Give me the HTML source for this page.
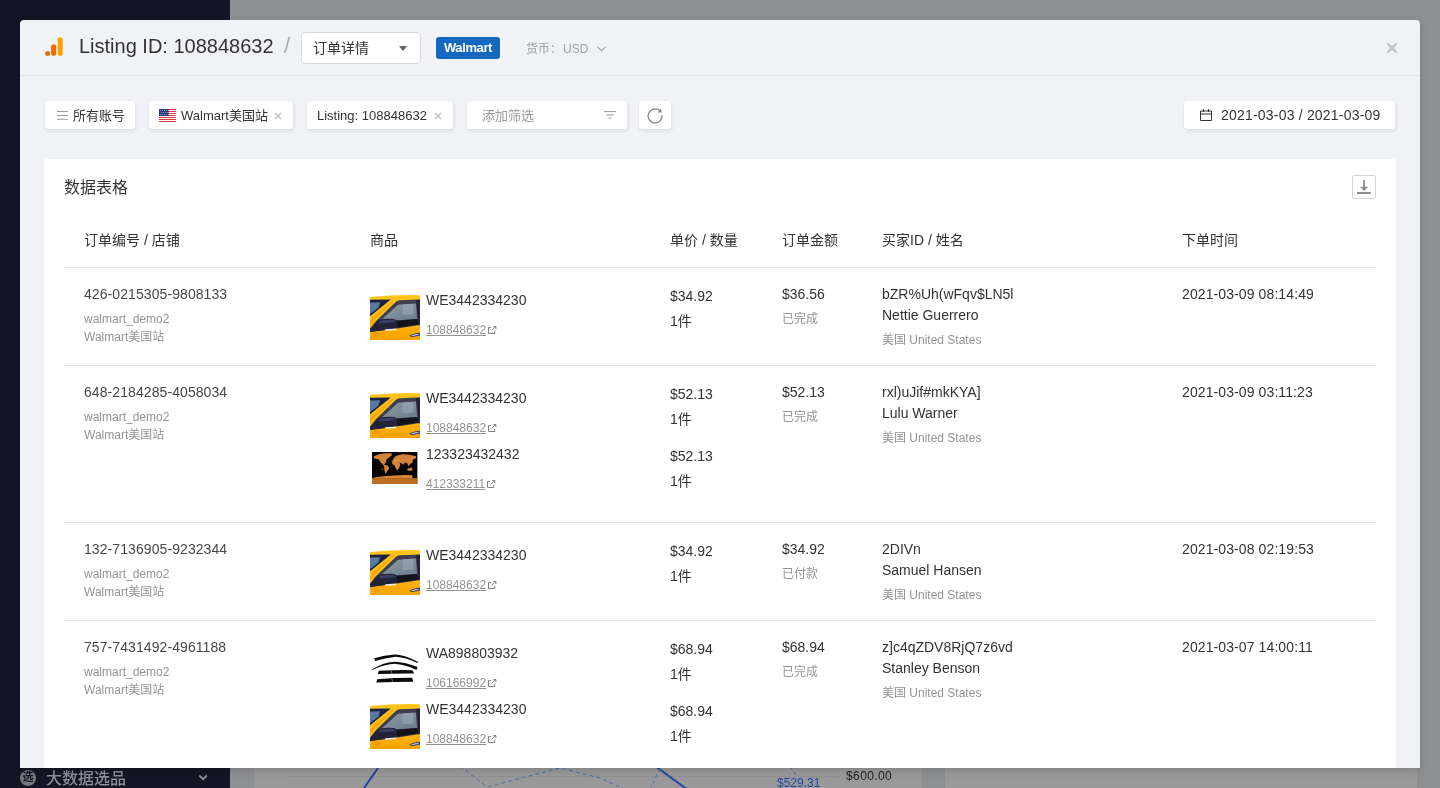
<!DOCTYPE html>
<html lang="zh-CN">
<head>
<meta charset="utf-8">
<title>Listing ID: 108848632</title>
<style>
*{box-sizing:border-box;margin:0;padding:0}
html,body{width:1440px;height:788px;overflow:hidden}
body{font-family:"Liberation Sans","Noto Sans CJK SC",sans-serif;font-size:14px;color:#333;background:#8e8f91;position:relative}
.abs{position:absolute}
/* background app */
.sidebar{position:absolute;left:0;top:0;width:230px;height:788px;background:#151526}
.sb-item{position:absolute;left:0;top:768px;width:230px;height:20px;color:#8d8d95;font-size:16px;line-height:20px;font-weight:500;will-change:transform}
.sb-ico{position:absolute;left:20px;top:2px;width:16px;height:16px;border-radius:50%;background:#77777f;color:#151526;font-size:11px;line-height:15px;text-align:center;font-weight:bold}
.bgpanel{position:absolute;background:#999999}
/* modal */
.modal{will-change:transform;position:absolute;left:20px;top:20px;width:1400px;height:748px;background:#f0f2f5;border-radius:4px 4px 0 0;box-shadow:0 3px 9px rgba(0,0,0,.15);overflow:hidden}
.mhead{position:absolute;left:0;top:0;width:1400px;height:56px;border-bottom:1px solid #e2e4e8}
.title{position:absolute;left:59px;top:12px;font-size:20px;line-height:28px;color:#333;white-space:nowrap}
.slash{position:absolute;left:264px;top:12px;font-size:22px;line-height:28px;color:#a8a8a8}
.sel{position:absolute;left:281px;top:12px;width:120px;height:32px;background:#fff;border:1px solid #d9d9d9;border-radius:4px;font-size:14px;line-height:30px;padding-left:11px;color:#333}
.sel i{position:absolute;right:13px;top:12.5px;width:0;height:0;border:4.6px solid transparent;border-top:5.8px solid #626262;border-bottom:0}
.badge{position:absolute;left:416px;top:17px;width:64px;height:22px;background:#1468c0;border-radius:3px;color:#fff;font-weight:bold;font-size:13px;line-height:22px;text-align:center;letter-spacing:-.4px}
.cur{position:absolute;left:506px;top:20px;font-size:12px;line-height:18px;color:#a0a0a0;white-space:nowrap}
.close{position:absolute;left:1364px;top:20px;width:16px;height:16px}
/* filter bar */
.fbtn{position:absolute;top:81px;height:28px;background:#fff;border-radius:2.5px;box-shadow:0 0 1px rgba(0,0,0,.14),1px 2px 4px rgba(0,0,0,.08);font-size:13px;line-height:30px;color:#333;white-space:nowrap}
.fbtn .x{color:#aaa;font-size:13px}
/* panel */
.panel{position:absolute;left:24px;top:139px;width:1352px;height:620px;background:#fff;border-radius:3px 3px 0 0}
.ptitle{position:absolute;left:20px;top:17px;font-size:16px;line-height:24px;color:#333}
.dl{position:absolute;left:1308px;top:16px;width:24px;height:24px;border:1px solid #d6d6d6;border-radius:2px;background:#fff}
.hline{position:absolute;left:20px;width:1312px;height:1px;background:#e6e6e6}
.t{position:absolute;white-space:nowrap;line-height:20px;font-size:14px;color:#333}
.g{font-size:12px;color:#939393;line-height:18px}
.lnk{font-size:12px;color:#939393;text-decoration:underline;line-height:18px}
</style>
</head>
<body>
<div class="sidebar"></div>
<div class="sb-item"><span class="sb-ico">选</span><span class="abs" style="left:46px;top:1px">大数据选品</span>
<svg class="abs" style="left:197px;top:6px" width="12" height="8" viewBox="0 0 12 8"><path d="M2.3 1.5 L6 5.2 L9.7 1.5" fill="none" stroke="#8d8d95" stroke-width="2"/></svg></div>
<div class="bgpanel" style="left:254px;top:760px;width:668px;height:28px"></div>
<div class="bgpanel" style="left:945px;top:760px;width:472px;height:28px"></div>
<svg class="abs" style="left:230px;top:760px;will-change:transform" width="1210" height="28" viewBox="230 760 1210 28">
<line x1="289" y1="776.5" x2="838" y2="776.5" stroke="#8f8f8f" stroke-width="1"/>
<path d="M364 788 L378 768" stroke="#1d47a8" stroke-width="2" fill="none"/>
<path d="M655 766 L688 790" stroke="#1d47a8" stroke-width="2" fill="none"/>
<path d="M460 766 L487 787 L560 768 L600 778 L640 796 M660 768 L650 790 M790 766 L796 775" stroke="#4d6fa8" stroke-width="1" stroke-dasharray="4 3" fill="none"/>
<text x="777" y="787" font-family="Liberation Sans, sans-serif" font-size="12" fill="#1d47a8">$529.31</text>
<text x="846" y="780" font-family="Liberation Sans, sans-serif" font-size="12" letter-spacing=".4" fill="#222">$600.00</text>
</svg>

<div class="modal">
 <div class="mhead">
  <svg class="abs" style="left:25px;top:17px" width="20" height="20" viewBox="0 0 20 20">
   <rect x="0.3" y="14.3" width="4.7" height="4.4" rx="1.5" fill="#e06a00"/>
   <rect x="6.1" y="7.5" width="5.1" height="11.2" rx="1.8" fill="#ef6c00"/>
   <rect x="12.7" y="0.6" width="5" height="18.1" rx="1.9" fill="#ffa000"/>
  </svg>
  <div class="title">Listing ID: 108848632</div>
  <div class="slash">/</div>
  <div class="sel">订单详情<i></i></div>
  <div class="badge">Walmart</div>
  <div class="cur">货币：<span style="margin-left:1px">USD</span><svg style="margin-left:9px;vertical-align:1px" width="9" height="6" viewBox="0 0 9 6"><path d="M0.5 0.8 L4.5 4.8 L8.5 0.8" fill="none" stroke="#999" stroke-width="1.1"/></svg></div>
  <svg class="close" viewBox="0 0 16 16"><path d="M3.4 3.4 L12.6 12.6 M12.6 3.4 L3.4 12.6" stroke="#c8c8c8" stroke-width="2.3" fill="none"/></svg>
 </div>

 <!-- filter bar -->
 <div class="fbtn" style="left:25px;width:90px">
  <svg class="abs" style="left:12px;top:9px" width="12" height="11" viewBox="0 0 12 11"><path d="M0 1.5 H11 M0 5.5 H11 M0 9.3 H11" stroke="#9a9a9a" stroke-width="1"/></svg>
  <span class="abs" style="left:28px;top:0">所有账号</span></div>
 <div class="fbtn" style="left:129px;width:144px">
  <svg class="abs" style="left:10px;top:8px" width="17" height="13" viewBox="0 0 17 13">
   <rect width="17" height="13" fill="#fff"/>
   <path d="M0 .5H17M0 2.5H17M0 4.5H17M0 6.5H17M0 8.5H17M0 10.5H17M0 12.5H17" stroke="#d93a44" stroke-width="1"/>
   <rect width="9.5" height="7" fill="#2c3e7e"/>
   <path d="M1 1.5h1M3 1.5h1M5 1.5h1M7 1.5h1M2 3.5h1M4 3.5h1M6 3.5h1M8 3.5h1M1 5.5h1M3 5.5h1M5 5.5h1M7 5.5h1" stroke="#fff" stroke-width=".8" opacity=".5"/>
  </svg>
  <span class="abs" style="left:32px;top:0">Walmart美国站</span>
  <svg class="abs" style="left:125px;top:10.5px" width="8" height="8" viewBox="0 0 8 8"><path d="M1 1 L7 7 M7 1 L1 7" stroke="#c2c2c2" stroke-width="1.6"/></svg></div>
 <div class="fbtn" style="left:287px;width:146px">
  <span class="abs" style="left:10px;top:0">Listing: 108848632</span>
  <svg class="abs" style="left:127px;top:10.5px" width="8" height="8" viewBox="0 0 8 8"><path d="M1 1 L7 7 M7 1 L1 7" stroke="#c2c2c2" stroke-width="1.6"/></svg></div>
 <div class="fbtn" style="left:447px;width:160px">
  <span class="abs" style="left:15px;top:0;color:#999">添加筛选</span>
  <svg class="abs" style="left:137px;top:9px" width="12" height="10" viewBox="0 0 12 10"><path d="M0 1.6 H12 M2.3 4.9 H9.7 M4.5 8.2 H7.5" stroke="#999" stroke-width="1"/></svg></div>
 <div class="fbtn" style="left:619px;width:32px">
  <svg class="abs" style="left:0;top:0" width="32" height="28" viewBox="0 0 32 28"><path d="M20.9 9.9 A7 7 0 1 0 23.03 14.3" fill="none" stroke="#858585" stroke-width="1.25"/><path d="M21.7 7.5 L22.9 11.6 L18.8 11.6 Z" fill="#858585"/></svg></div>
 <div class="fbtn" style="left:1164px;width:211px">
  <svg class="abs" style="left:15px;top:7px" width="14" height="14" viewBox="0 0 14 14"><path d="M1.5 3 H12.5 V12.5 H1.5 Z M1.5 6 H12.5 M4.5 1 V4 M9.5 1 V4" fill="none" stroke="#333" stroke-width="1"/></svg>
  <span class="abs" style="left:37px;top:-1px;font-size:14px;letter-spacing:.2px">2021-03-03 / 2021-03-09</span></div>

 <div class="panel" id="panel">
  <div class="ptitle">数据表格</div>
  <div class="dl"><svg class="abs" style="left:-1px;top:-1px" width="24" height="24" viewBox="0 0 24 24"><path d="M12.1 5 V13" stroke="#8c8c8c" stroke-width="1.8"/><path d="M8 11.8 L16.2 11.8 L12.1 16 Z" fill="#8c8c8c"/><path d="M5 18 H18.8" stroke="#8c8c8c" stroke-width="2"/></svg></div>
  <svg width="0" height="0" style="position:absolute"><defs>
<symbol id="car" viewBox="130 125 660 597" preserveAspectRatio="none">
 <linearGradient id="cg" x1="0" y1="0" x2="0" y2="1"><stop offset="0" stop-color="#ffc51c"/><stop offset=".55" stop-color="#fdb710"/><stop offset="1" stop-color="#f8a200"/></linearGradient>
 <linearGradient id="gg" x1="0" y1="0" x2="1" y2="1"><stop offset="0" stop-color="#8e9ca8"/><stop offset="1" stop-color="#6c7b8a"/></linearGradient>
 <rect x="130" y="125" width="660" height="597" fill="url(#cg)"/>
 <path d="M130 152 Q460 118 790 128 V125 H130Z" fill="#fff"/>
 <path d="M130 186 L405 184 L130 405Z" fill="#1b2040"/>
 <path d="M130 224 L266 221 L243 288 L130 378Z" fill="#587aa0"/>
 <path d="M130 470 L430 196 L446 200 L130 492Z" fill="#e89a00" opacity=".75"/>
 <path d="M207 468 L470 216 Q492 196 522 194 L790 184 V520 L490 566 L200 602 L130 612 V572Z" fill="#3f3e50"/>
 <path d="M740 190 L790 186 V520 L772 522Z" fill="#23222e"/>
 <path d="M288 442 L500 252 L736 236 L752 440 L480 456Z" fill="url(#gg)"/>
 <path d="M560 248 L700 240 L706 380 L560 390Z" fill="#a3b0ba" opacity=".5"/>
 <path d="M480 462 L756 440 L772 512 L490 554Z" fill="#13131c"/>
 <path d="M248 453 Q340 432 440 440 Q486 448 488 480 V562 L330 584 L132 612 V572 L200 494Z" fill="#222238"/>
 <path d="M262 462 Q350 446 436 452 Q470 458 474 482 L250 500Z" fill="#3c4468" opacity=".9"/>
 <path d="M330 573 L484 563 L474 587 L332 593Z" fill="#ecebe4"/>
 <path d="M650 656 Q700 626 790 620 V656 L680 679Z" fill="#363d62"/>
 <path d="M668 656 Q720 636 777 632 L772 648 L690 666Z" fill="#b0bace"/>
 <ellipse cx="215" cy="642" rx="52" ry="34" fill="#ef9600" opacity=".6"/>
</symbol>
<symbol id="map" viewBox="160 155 600 425" preserveAspectRatio="none">
 <rect x="160" y="155" width="600" height="425" fill="#060403"/>
 <rect x="160" y="500" width="600" height="80" fill="#c47327"/>
 <path d="M160 520H760M160 540H760M160 560H760M200 500V580M240 500V580M280 500V580M320 500V580M360 500V580M400 500V580M440 500V580M480 500V580M520 500V580M560 500V580M600 500V580M640 500V580M680 500V580M720 500V580" stroke="#a85f1c" stroke-width="5" opacity=".6"/>
 <path d="M185 492 L260 480 L350 470 L450 464 L600 456 L690 460 L692 502 L185 502Z" fill="#d98737"/>
 <path d="M180 215 L250 185 L330 173 L415 173 L422 198 L385 228 L352 250 L342 292 L318 318 L335 330 L372 336 L386 372 L352 420 L337 442 L324 400 L318 340 L296 312 L272 290 L248 250 L190 240Z" fill="#d5833a"/>
 <path d="M430 262 L452 228 L482 204 L560 185 L652 190 L742 210 L736 236 L702 252 L692 292 L662 312 L642 342 L622 302 L592 292 L572 322 L542 300 L522 292 L532 332 L512 372 L492 396 L470 370 L460 332 L430 320 L424 290Z" fill="#d5833a"/>
 <path d="M625 376 L680 360 L696 394 L652 406 L626 396Z" fill="#d5833a"/>
 <path d="M440 268h80v6h-80z M390 345h45v5h-45z M280 375h30v10h-30z" fill="#f1e0cc" opacity=".55"/>
</symbol>
<symbol id="visor" viewBox="131.4 65.7 657 591.3" preserveAspectRatio="none">
 <path d="M185 240 Q330 200 450 190 Q560 185 765 288 L755 302 Q560 215 450 222 Q330 232 200 275 Z" fill="#0a0a0a"/>
 <path d="M155 388 Q300 295 450 285 Q600 290 757 355 L742 393 Q600 325 450 312 Q300 325 170 392 Z" fill="#0a0a0a"/>
 <path d="M248 405 Q470 392 690 396 L712 440 Q470 438 235 448 Z" fill="#0a0a0a"/>
 <path d="M228 515 Q450 496 685 497 L700 548 Q450 548 212 560 Z" fill="#0a0a0a"/>
 <path d="M412 400 L418 445 M418 505 L428 552" stroke="#fff" stroke-width="6" opacity=".85"/>
</symbol>
</defs></svg>
<div class="t " style="left:40px;top:71px;">订单编号 / 店铺</div>
<div class="t " style="left:326px;top:71px;">商品</div>
<div class="t " style="left:626px;top:71px;">单价 / 数量</div>
<div class="t " style="left:738px;top:71px;">订单金额</div>
<div class="t " style="left:838px;top:71px;">买家ID / 姓名</div>
<div class="t " style="left:1138px;top:71px;">下单时间</div>
<div class="hline" style="top:108px"></div>
<div class="t " style="left:40px;top:125px;color:#484848;letter-spacing:.08px">426-0215305-9808133</div>
<div class="t g" style="left:40px;top:151px;">walmart_demo2</div>
<div class="t g" style="left:40px;top:169px;">Walmart美国站</div>
<div class="t " style="left:738px;top:125px;">$36.56</div>
<div class="t g" style="left:738px;top:151px;">已完成</div>
<div class="t " style="left:838px;top:125px;">bZR%Uh(wFqv$LN5l</div>
<div class="t " style="left:838px;top:146px;">Nettie Guerrero</div>
<div class="t g" style="left:838px;top:172px;">美国 United States</div>
<div class="t " style="left:1138px;top:125px;letter-spacing:.1px">2021-03-09 08:14:49</div>
<svg class="abs" style="left:326px;top:135.5px" width="50" height="45.5"><use href="#car" width="50" height="45.5"/></svg>
<div class="t " style="left:382px;top:131px;">WE3442334230</div>
<div class="t lnk" style="left:382px;top:162px"><span style="text-decoration:underline">108848632</span><svg style="margin-left:2px;vertical-align:0px" width="9" height="8" viewBox="0 0 9 8"><path d="M3.2 1.6 H0.5 V7.5 H6.8 V4.6 M3.6 4.4 L7.7 0.5 M5.4 0.45 H7.9 V3" fill="none" stroke="#6a6a6a" stroke-width="0.85"/></svg></div>
<div class="t " style="left:626px;top:127px;">$34.92</div>
<div class="t " style="left:626px;top:152px;">1件</div>
<div class="hline" style="top:206px"></div>
<div class="t " style="left:40px;top:223px;color:#484848;letter-spacing:.08px">648-2184285-4058034</div>
<div class="t g" style="left:40px;top:249px;">walmart_demo2</div>
<div class="t g" style="left:40px;top:267px;">Walmart美国站</div>
<div class="t " style="left:738px;top:223px;">$52.13</div>
<div class="t g" style="left:738px;top:249px;">已完成</div>
<div class="t " style="left:838px;top:223px;">rxl)uJif#mkKYA]</div>
<div class="t " style="left:838px;top:244px;">Lulu Warner</div>
<div class="t g" style="left:838px;top:270px;">美国 United States</div>
<div class="t " style="left:1138px;top:223px;letter-spacing:.1px">2021-03-09 03:11:23</div>
<svg class="abs" style="left:326px;top:233.5px" width="50" height="45.5"><use href="#car" width="50" height="45.5"/></svg>
<div class="t " style="left:382px;top:229px;">WE3442334230</div>
<div class="t lnk" style="left:382px;top:260px"><span style="text-decoration:underline">108848632</span><svg style="margin-left:2px;vertical-align:0px" width="9" height="8" viewBox="0 0 9 8"><path d="M3.2 1.6 H0.5 V7.5 H6.8 V4.6 M3.6 4.4 L7.7 0.5 M5.4 0.45 H7.9 V3" fill="none" stroke="#6a6a6a" stroke-width="0.85"/></svg></div>
<div class="t " style="left:626px;top:225px;">$52.13</div>
<div class="t " style="left:626px;top:250px;">1件</div>
<svg class="abs" style="left:328.2px;top:292.8px" width="45.6" height="32.3"><use href="#map" width="45.6" height="32.3"/></svg>
<div class="t " style="left:382px;top:285px;">123323432432</div>
<div class="t lnk" style="left:382px;top:316px"><span style="text-decoration:underline">412333211</span><svg style="margin-left:2px;vertical-align:0px" width="9" height="8" viewBox="0 0 9 8"><path d="M3.2 1.6 H0.5 V7.5 H6.8 V4.6 M3.6 4.4 L7.7 0.5 M5.4 0.45 H7.9 V3" fill="none" stroke="#6a6a6a" stroke-width="0.85"/></svg></div>
<div class="t " style="left:626px;top:287px;">$52.13</div>
<div class="t " style="left:626px;top:312px;">1件</div>
<div class="hline" style="top:363px"></div>
<div class="t " style="left:40px;top:380px;color:#484848;letter-spacing:.08px">132-7136905-9232344</div>
<div class="t g" style="left:40px;top:406px;">walmart_demo2</div>
<div class="t g" style="left:40px;top:424px;">Walmart美国站</div>
<div class="t " style="left:738px;top:380px;">$34.92</div>
<div class="t g" style="left:738px;top:406px;">已付款</div>
<div class="t " style="left:838px;top:380px;">2DIVn</div>
<div class="t " style="left:838px;top:401px;">Samuel Hansen</div>
<div class="t g" style="left:838px;top:427px;">美国 United States</div>
<div class="t " style="left:1138px;top:380px;letter-spacing:.1px">2021-03-08 02:19:53</div>
<svg class="abs" style="left:326px;top:390.5px" width="50" height="45.5"><use href="#car" width="50" height="45.5"/></svg>
<div class="t " style="left:382px;top:386px;">WE3442334230</div>
<div class="t lnk" style="left:382px;top:417px"><span style="text-decoration:underline">108848632</span><svg style="margin-left:2px;vertical-align:0px" width="9" height="8" viewBox="0 0 9 8"><path d="M3.2 1.6 H0.5 V7.5 H6.8 V4.6 M3.6 4.4 L7.7 0.5 M5.4 0.45 H7.9 V3" fill="none" stroke="#6a6a6a" stroke-width="0.85"/></svg></div>
<div class="t " style="left:626px;top:382px;">$34.92</div>
<div class="t " style="left:626px;top:407px;">1件</div>
<div class="hline" style="top:461px"></div>
<div class="t " style="left:40px;top:478px;color:#484848;letter-spacing:.08px">757-7431492-4961188</div>
<div class="t g" style="left:40px;top:504px;">walmart_demo2</div>
<div class="t g" style="left:40px;top:522px;">Walmart美国站</div>
<div class="t " style="left:738px;top:478px;">$68.94</div>
<div class="t g" style="left:738px;top:504px;">已完成</div>
<div class="t " style="left:838px;top:478px;">z]c4qZDV8RjQ7z6vd</div>
<div class="t " style="left:838px;top:499px;">Stanley Benson</div>
<div class="t g" style="left:838px;top:525px;">美国 United States</div>
<div class="t " style="left:1138px;top:478px;letter-spacing:.1px">2021-03-07 14:00:11</div>
<svg class="abs" style="left:326px;top:486px" width="50" height="45"><use href="#visor" width="50" height="45"/></svg>
<div class="t " style="left:382px;top:484px;">WA898803932</div>
<div class="t lnk" style="left:382px;top:515px"><span style="text-decoration:underline">106166992</span><svg style="margin-left:2px;vertical-align:0px" width="9" height="8" viewBox="0 0 9 8"><path d="M3.2 1.6 H0.5 V7.5 H6.8 V4.6 M3.6 4.4 L7.7 0.5 M5.4 0.45 H7.9 V3" fill="none" stroke="#6a6a6a" stroke-width="0.85"/></svg></div>
<div class="t " style="left:626px;top:480px;">$68.94</div>
<div class="t " style="left:626px;top:505px;">1件</div>
<svg class="abs" style="left:326px;top:544.5px" width="50" height="45.5"><use href="#car" width="50" height="45.5"/></svg>
<div class="t " style="left:382px;top:540px;">WE3442334230</div>
<div class="t lnk" style="left:382px;top:571px"><span style="text-decoration:underline">108848632</span><svg style="margin-left:2px;vertical-align:0px" width="9" height="8" viewBox="0 0 9 8"><path d="M3.2 1.6 H0.5 V7.5 H6.8 V4.6 M3.6 4.4 L7.7 0.5 M5.4 0.45 H7.9 V3" fill="none" stroke="#6a6a6a" stroke-width="0.85"/></svg></div>
<div class="t " style="left:626px;top:542px;">$68.94</div>
<div class="t " style="left:626px;top:567px;">1件</div>
 </div>
</div>
</body>
</html>
